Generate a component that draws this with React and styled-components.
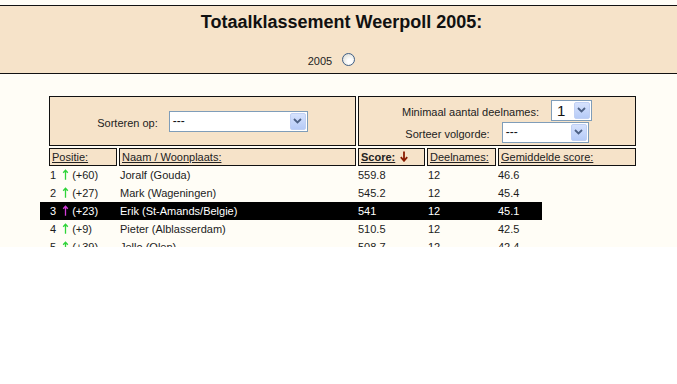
import React from 'react'
import styled, { createGlobalStyle } from 'styled-components'

const GlobalStyle = createGlobalStyle`
  body {
    margin: 0;
    background: #ffffff;
    font-family: "Liberation Sans", Arial, sans-serif;
  }
`

const rows = [
  { pos: 1, change: '+60', name: 'Joralf (Gouda)', score: '559.8', count: 12, avg: '46.6' },
  { pos: 2, change: '+27', name: 'Mark (Wageningen)', score: '545.2', count: 12, avg: '45.4' },
  { pos: 3, change: '+23', name: 'Erik (St-Amands/Belgie)', score: '541', count: 12, avg: '45.1', active: true },
  { pos: 4, change: '+9', name: 'Pieter (Alblasserdam)', score: '510.5', count: 12, avg: '42.5' },
  { pos: 5, change: '+39', name: 'Jello (Olen)', score: '508.7', count: 12, avg: '42.4' },
]

function UpArrow({ color }) {
  return (
    <ArrowIcon width="7" height="11" viewBox="0 0 7 11">
      <path d="M3.5 10.8 V1.5 M1.2 3.8 L3.5 1.2 L5.8 3.8" stroke={color} strokeWidth="1.3" fill="none" />
    </ArrowIcon>
  )
}

function DownArrow() {
  return (
    <SortIcon width="8" height="11" viewBox="0 0 8 11">
      <path d="M4 0.5 V9.5 M0.8 6.2 L4 9.8 L7.2 6.2" stroke="#8a1c00" strokeWidth="1.8" fill="none" />
    </SortIcon>
  )
}

function Dropdown({ width, value, big }) {
  return (
    <SelectBox $w={width}>
      <SelectValue $big={big}>{value}</SelectValue>
      <SelectButton>
        <svg width="9" height="6" viewBox="0 0 9 6">
          <path d="M1 1 L4.5 4.5 L8 1" stroke="#4d6185" strokeWidth="1.8" fill="none" />
        </svg>
      </SelectButton>
    </SelectBox>
  )
}

export default function App() {
  return (
    <>
      <GlobalStyle />
      <Page>
        <Header>
          <Title>Totaalklassement Weerpoll 2005:</Title>
          <YearRow>
            <YearLabel>2005</YearLabel>
            <Radio />
          </YearRow>
        </Header>

        <Content>
          <FilterGrid>
            <FilterCell>
              <FieldRow>
                <Label>Sorteren op:</Label>
                <Dropdown width={139} value="---" />
              </FieldRow>
            </FilterCell>
            <FilterCell $stack>
              <FieldRow $gap={12}>
                <Label>Minimaal aantal deelnames:</Label>
                <Dropdown width={41} value="1" big />
              </FieldRow>
              <FieldRow $gap={12}>
                <Label>Sorteer volgorde:</Label>
                <Dropdown width={87} value="---" />
              </FieldRow>
            </FilterCell>
          </FilterGrid>

          <HeadRow>
            <HeadCell>Positie:</HeadCell>
            <HeadCell>Naam / Woonplaats:</HeadCell>
            <HeadCell $bold>Score:<DownArrow /></HeadCell>
            <HeadCell>Deelnames:</HeadCell>
            <HeadCell>Gemiddelde score:</HeadCell>
          </HeadRow>

          {rows.map((r) => (
            <DataRow key={r.pos} $active={r.active}>
              <Cell>
                {r.pos}<UpArrow color={r.active ? '#d23cd8' : '#2fd43a'} />({r.change})
              </Cell>
              <Cell>{r.name}</Cell>
              <Cell $tight>{r.score}</Cell>
              <Cell>{r.count}</Cell>
              <Cell $tight>{r.avg}</Cell>
            </DataRow>
          ))}
        </Content>
      </Page>
    </>
  )
}

const cols = '68px 237px 67px 69px 138px'

const Page = styled.div`
  height: 247px;
  overflow: hidden;
  padding-top: 5px;
  box-sizing: border-box;
  background: #fffdf6;
`

const Header = styled.div`
  background: #f6e3c9;
  border-top: 1px solid #111;
  border-bottom: 1px solid #111;
  padding: 6px 0 7px;
  text-align: center;
`

const Title = styled.h1`
  margin: 0;
  font-size: 18px;
  line-height: 21px;
  font-weight: bold;
  color: #111;
  padding-left: 6px;
`

const YearRow = styled.div`
  margin-top: 20px;
  height: 13px;
  display: flex;
  justify-content: center;
  align-items: center;
  gap: 10px;
  padding-right: 14px;
`

const YearLabel = styled.span`
  font-size: 11px;
  color: #222;
  padding-top: 3px;
`

const Radio = styled.span`
  width: 11px;
  height: 11px;
  border-radius: 50%;
  border: 1px solid #3f5f86;
  background: radial-gradient(circle at 60% 65%, #ffffff 20%, #e2e2dc 75%, #c9c9c2 100%);
`

const Content = styled.div`
  margin: 22px 0 0 49px;
  width: 587px;
`

const FilterGrid = styled.div`
  display: grid;
  grid-template-columns: 307px 278px;
  column-gap: 2px;
`

const FilterCell = styled.div`
  height: 50px;
  box-sizing: border-box;
  background: #f6e3c9;
  border: 1px solid #111;
  display: flex;
  flex-direction: column;
  justify-content: center;
  align-items: center;
  gap: ${(p) => (p.$stack ? '1px' : '0')};
`

const FieldRow = styled.div`
  display: flex;
  align-items: flex-end;
  gap: ${(p) => p.$gap || 11}px;
`

const Label = styled.span`
  font-size: 11px;
  line-height: 13px;
  color: #222;
  padding-bottom: 2px;
`

const SelectBox = styled.div`
  width: ${(p) => p.$w}px;
  height: 21px;
  box-sizing: border-box;
  border: 1px solid #7f9db9;
  background: #fff;
  display: flex;
  align-items: stretch;
`

const SelectValue = styled.span`
  flex: 1;
  font-size: ${(p) => (p.$big ? '15px' : '12px')};
  line-height: 19px;
  padding-left: ${(p) => (p.$big ? '5px' : '3px')};
  color: #111;
`

const SelectButton = styled.span`
  width: 16px;
  margin: 1px;
  border-radius: 2px;
  border: 1px solid #c0d0f4;
  box-sizing: border-box;
  background: linear-gradient(#d6e2fd, #b6cbf7);
  display: flex;
  align-items: center;
  justify-content: center;
`

const HeadRow = styled.div`
  display: grid;
  grid-template-columns: ${cols};
  column-gap: 2px;
  margin-top: 2px;
`

const HeadCell = styled.div`
  height: 18px;
  box-sizing: border-box;
  background: #f6e3c9;
  border: 1px solid #111;
  padding-left: 2px;
  font-size: 11px;
  line-height: 16px;
  color: #222;
  text-decoration: underline;
  font-weight: ${(p) => (p.$bold ? 'bold' : 'normal')};
  white-space: nowrap;
`

const SortIcon = styled.svg`
  margin-left: 5px;
  vertical-align: -1px;
`

const DataRow = styled.div`
  display: grid;
  grid-template-columns: ${cols};
  column-gap: 2px;
  height: 18px;
  margin-left: -9px;
  padding-left: 9px;
  color: ${(p) => (p.$active ? '#fff' : '#1c1c1c')};
  background: ${(p) => (p.$active ? 'linear-gradient(#000, #000) no-repeat 0 0 / 502px 100%' : 'none')};
  &:first-of-type {
    margin-top: 2px;
  }
`

const Cell = styled.div`
  font-size: 11px;
  line-height: 18px;
  padding-left: ${(p) => (p.$tight ? '0' : '1px')};
  white-space: nowrap;
`

const ArrowIcon = styled.svg`
  margin: 0 3px 0 6px;
  vertical-align: -1px;
`
